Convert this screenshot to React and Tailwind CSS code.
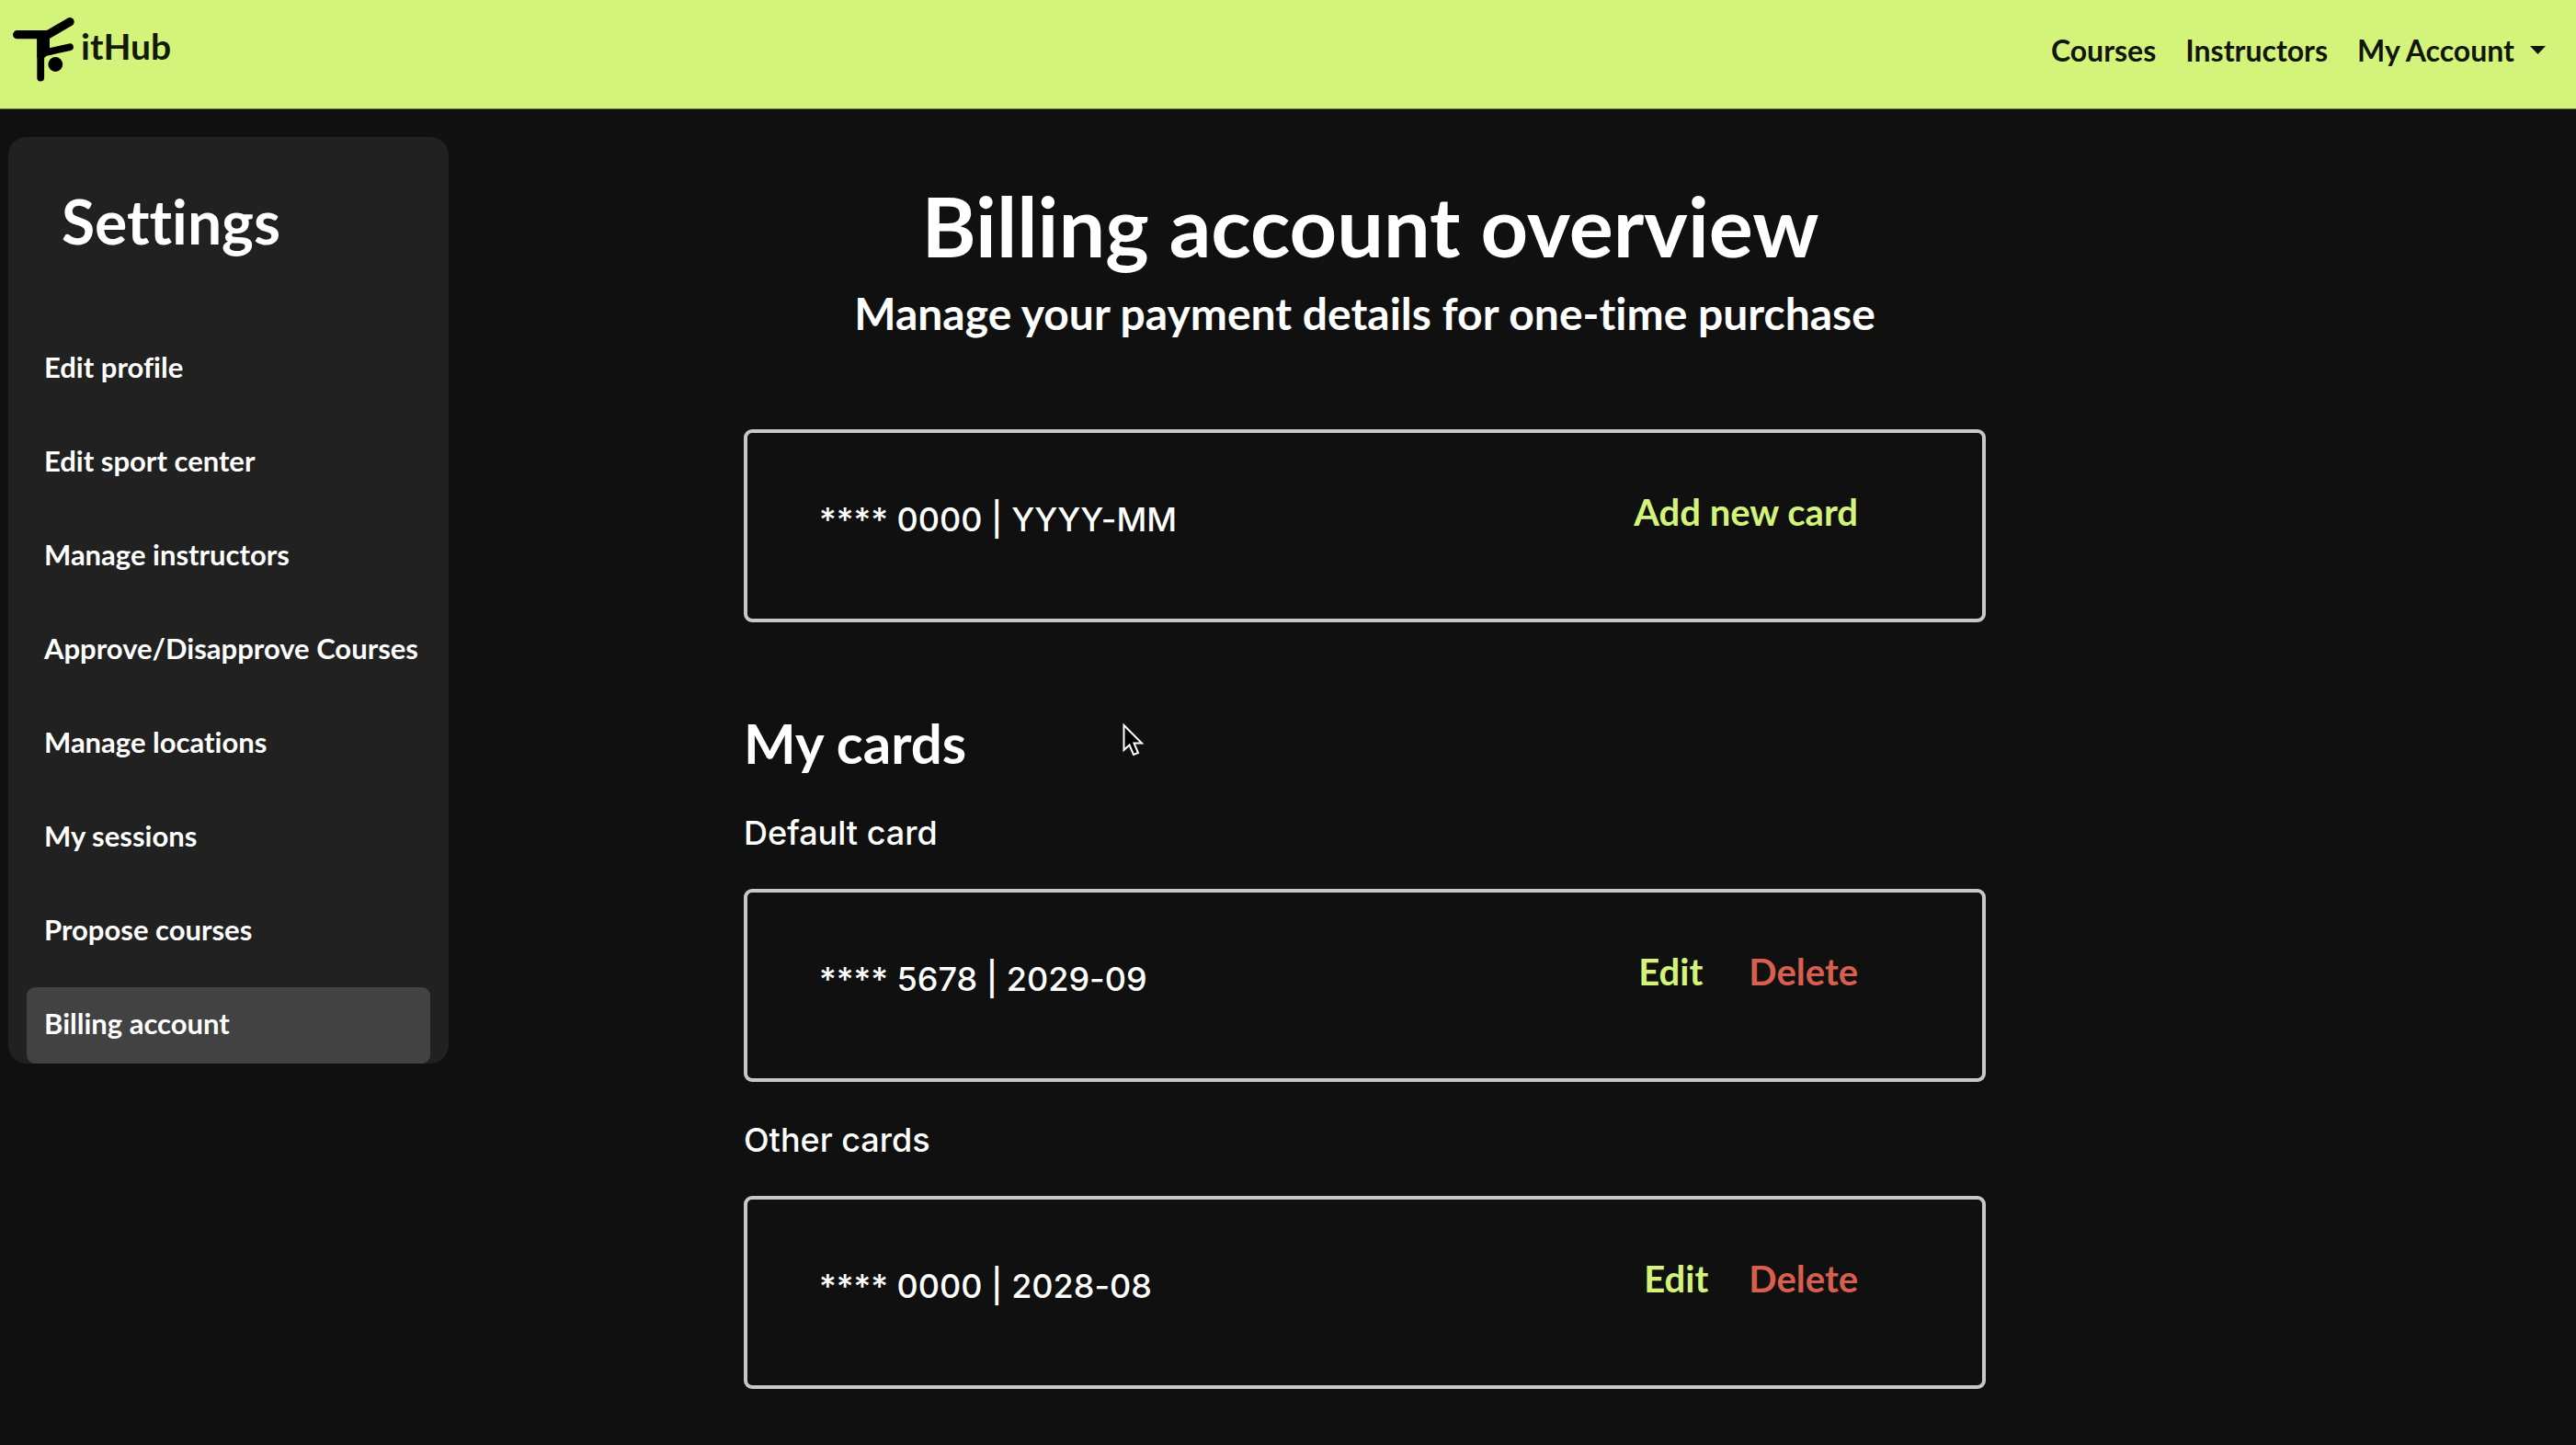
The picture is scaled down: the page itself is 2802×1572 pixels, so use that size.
import React from "react";

const menu = [
  "Edit profile",
  "Edit sport center",
  "Manage instructors",
  "Approve/Disapprove Courses",
  "Manage locations",
  "My sessions",
  "Propose courses",
  "Billing account",
];

function Logo() {
  return (
    <a href="#home" aria-label="FitHub" className="flex items-center gap-[6px] text-[#141a08]">
      <svg width="68" height="72" viewBox="0 0 68 72" fill="none" stroke="#000" strokeLinecap="round" strokeLinejoin="round" aria-hidden="true">
        <path d="M4.700 20.700H38L62 6.700" strokeWidth="9.300" />
        <path d="M30.200 22V67.500" strokeWidth="7.800" />
        <path d="M26.300 20H40V35L44 42L37 43.500L34 46H26.300Z" fill="#000" stroke="none" />
        <path d="M38 39.500L62 34.200" strokeWidth="7.800" />
        <circle cx="46.300" cy="53" r="7.900" fill="#000" stroke="none" />
      </svg>
      <span className="pb-[6px] text-[39px] leading-[48px] font-bold">itHub</span>
    </a>
  );
}

function Header() {
  return (
    <header className="flex h-[119px] items-center justify-between border-b border-[#5d6b39] bg-[#d4f37b] pr-[33px] pb-3 pl-[14px]">
      <Logo />
      <nav className="flex items-center gap-8 pt-[3px] text-[32px] leading-[40px] font-bold text-[#12160a]">
        <a href="#courses">Courses</a>
        <a href="#instructors">Instructors</a>
        <button type="button" className="flex items-center gap-[17px]">
          My Account
          <svg width="17" height="9" viewBox="0 0 17 9" fill="currentColor" aria-hidden="true">
            <path d="M0 0H17L8.500 9Z" />
          </svg>
        </button>
      </nav>
    </header>
  );
}

function Sidebar() {
  return (
    <aside className="mt-[30px] ml-[9px] w-[479px] shrink-0 rounded-[20px] bg-[#212121] px-5 pt-[52px]">
      <h2 className="pl-[38px] text-[66px] leading-[80px] font-bold">Settings</h2>
      <ul className="mt-[79px] flex flex-col gap-[19px]">
        {menu.map((item) => (
          <li key={item}>
            <a
              href={"#" + item.toLowerCase().replace(/\W+/g, "-")}
              className={
                "block rounded-[9px] pt-[15px] pb-5 pl-[19px] text-[31px] leading-[48px] font-bold whitespace-nowrap " +
                (item === "Billing account" ? "bg-[#424242]" : "")
              }
            >
              {item}
            </a>
          </li>
        ))}
      </ul>
    </aside>
  );
}

function Card({ text, children }) {
  return (
    <div className="flex h-[210px] items-start justify-between rounded-[9px] border-4 border-[#c8c8c8] pt-[62px] pr-[135px] pl-[78px]">
      <p className="mt-2 font-['Inter',sans-serif] text-[36px] leading-[48px] font-medium">{text}</p>
      <div className="flex text-[40px] leading-[48px] font-bold">{children}</div>
    </div>
  );
}

const label = "font-['Inter',sans-serif] text-[36px] leading-[48px] font-medium mb-[37px]";

export default function App() {
  return (
    <div className="relative min-h-screen bg-[#101010] font-['Lato',sans-serif] text-white [font-variant-ligatures:none]">
      <Header />
      <div className="flex items-start">
        <Sidebar />
        <main className="ml-[321px] max-w-[1351px] flex-1 pt-[66px]">
          <h1 className="pl-3 text-center text-[90px] leading-[120px] font-bold">Billing account overview</h1>
          <p className="mb-[90px] text-center text-[48px] leading-[72px] font-bold">
            Manage your payment details for one-time purchase
          </p>
          <Card text="**** 0000 | YYYY-MM">
            <button type="button" className="text-[#d4f37b]">Add new card</button>
          </Card>
          <h2 className="mt-[95px] text-[60px] leading-[72px] font-bold">My cards</h2>
          <h3 className={label + " mt-[38px]"}>Default card</h3>
          <Card text="**** 5678 | 2029-09">
            <button type="button" className="mr-[50px] text-[#d4f37b]">Edit</button>
            <button type="button" className="text-[#d85f4e]">Delete</button>
          </Card>
          <h3 className={label + " mt-[39px]"}>Other cards</h3>
          <Card text="**** 0000 | 2028-08">
            <button type="button" className="mr-[44px] text-[#d4f37b]">Edit</button>
            <button type="button" className="text-[#d85f4e]">Delete</button>
          </Card>
        </main>
      </div>
      <svg className="absolute top-[786px] left-[1221px]" width="24" height="37" viewBox="0 0 24 37" fill="#000" stroke="#fff" strokeWidth="2" aria-hidden="true">
        <path d="M1.500 3V30L7.500 24.500L12 35L17 33L12.500 22.500H21Z" />
      </svg>
    </div>
  );
}
